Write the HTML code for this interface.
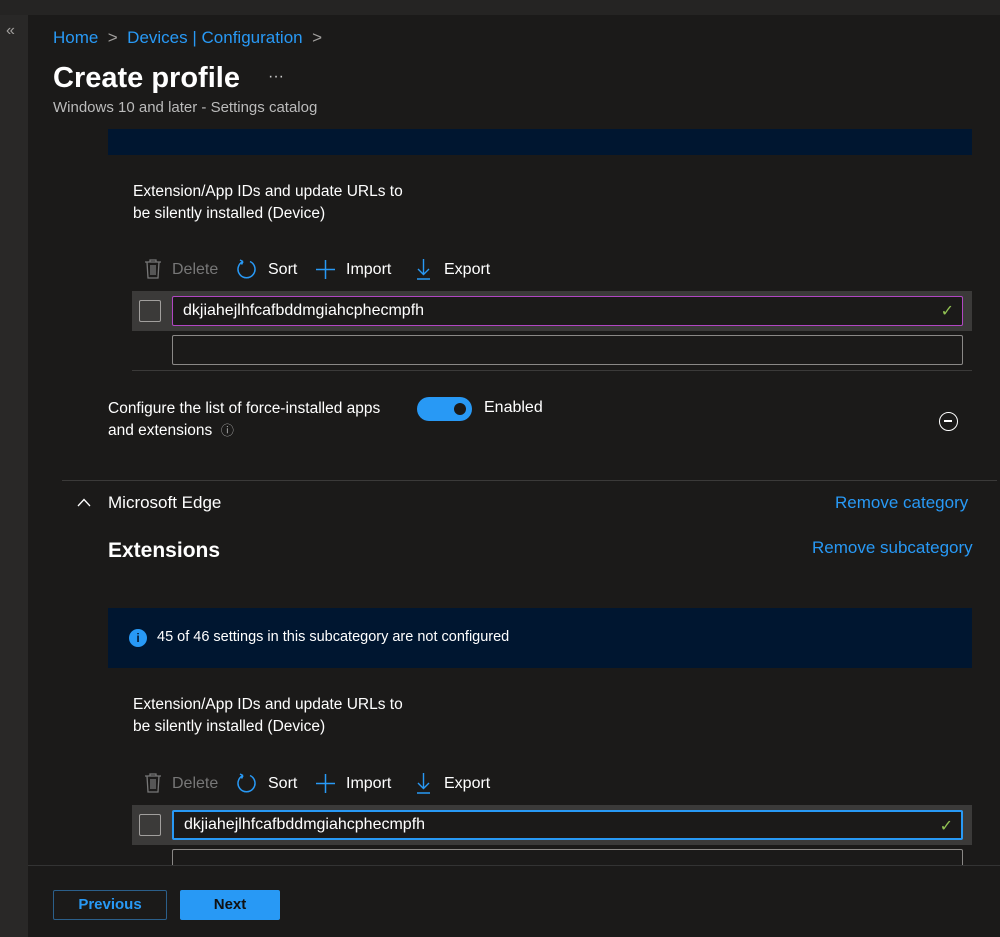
<!DOCTYPE html>
<html><head><style>
*{box-sizing:border-box;margin:0;padding:0}
body{width:1000px;height:937px;background:#1b1a19;font-family:"Liberation Sans",sans-serif;color:#fff;position:relative;overflow:hidden}
.a{position:absolute}
.blue{color:#2899f5}
.t{font-size:15.5px}
.info{background:#001630}
.inp{border:1px solid #8a8886;border-radius:2px;background:#1b1a19}
.cb{width:22px;height:22px;border:1px solid #a19f9d;border-radius:2px}
.tl{font-size:16px;line-height:20px}
</style></head><body>
<div class="a" style="left:0;top:0;width:1000px;height:15px;background:#252423"></div>
<div class="a" style="left:0;top:15px;width:28px;height:922px;background:#292827"></div>
<div class="a" style="left:6px;top:22px;color:#a19f9d;font-size:16px">«</div>
<div class="a blue" style="left:53px;top:28px;font-size:17px">Home <span style="color:#a19f9d">&nbsp;&gt;&nbsp;</span> Devices | Configuration <span style="color:#a19f9d">&nbsp;&gt;</span></div>
<div class="a" style="left:53px;top:62px;font-size:29px;font-weight:bold">Create profile</div>
<div class="a" style="left:268px;top:68px;font-size:16px;color:#ccc">···</div>
<div class="a" style="left:53px;top:99px;font-size:15px;color:#bbb">Windows 10 and later - Settings catalog</div>

<div class="a" style="left:28px;top:129px;width:972px;height:736px;overflow:hidden">
 <div class="a info" style="left:80px;top:-10px;width:864px;height:36px"></div>
 <div class="a t" style="left:105px;top:52px;line-height:22px">Extension/App IDs and update URLs to<br>be silently installed (Device)</div>
 <!-- toolbar 1 -->
 <svg class="a" style="left:116px;top:130px" width="18" height="20" viewBox="0 0 18 20" fill="none" stroke="#777" stroke-width="1.3"><path d="M1 3h16M6 3V1h6v2M3 3l1 16h10l1-16M7 6v10M9 6v10M11 6v10"/></svg>
 <div class="a tl" style="left:144px;top:131px;color:#777">Delete</div>
 <svg class="a" style="left:208px;top:130px" width="21" height="21" viewBox="0 0 21 21" fill="none" stroke="#2899f5" stroke-width="1.5"><path d="M7 2.5A8.5 8.5 0 1 0 14 2.5M7 2.5L4 1M7 2.5L5.5 5.5"/></svg>
 <div class="a tl" style="left:240px;top:131px">Sort</div>
 <svg class="a" style="left:288px;top:131px" width="19" height="19" viewBox="0 0 19 19" stroke="#2899f5" stroke-width="1.5"><path d="M9.5 0v19M0 9.5h19"/></svg>
 <div class="a tl" style="left:318px;top:131px">Import</div>
 <svg class="a" style="left:388px;top:130px" width="15" height="21" viewBox="0 0 15 21" fill="none" stroke="#2899f5" stroke-width="1.4"><path d="M7.5 0v15M2 10l5.5 5.5L13 10M1 20h13"/></svg>
 <div class="a tl" style="left:416px;top:131px">Export</div>
 <div class="a" style="left:104px;top:162px;width:840px;height:40px;background:#3b3a39"></div>
 <div class="a cb" style="left:111px;top:171px"></div>
 <div class="a inp" style="left:144px;top:167px;width:791px;height:30px;border-color:#b146c2;padding:5px 10px;font-size:16px">dkjiahejlhfcafbddmgiahcphecmpfh<span class="a" style="right:8px;top:4px;color:#92c353">✓</span></div>
 <div class="a inp" style="left:144px;top:206px;width:791px;height:30px"></div>
 <div class="a" style="left:104px;top:241px;width:840px;height:1px;background:#3b3a39"></div>
 <div class="a t" style="left:80px;top:269px;line-height:22px">Configure the list of force-installed apps<br>and extensions &nbsp;<span style="color:#aaa;font-size:13px">ⓘ</span></div>
 <div class="a" style="left:389px;top:268px;width:55px;height:24px;border-radius:12px;background:#2899f5"><div class="a" style="right:6px;top:6px;width:12px;height:12px;border-radius:6px;background:#1b1a19"></div></div>
 <div class="a" style="left:456px;top:270px;font-size:16px">Enabled</div>
 <div class="a" style="left:911px;top:283px;width:19px;height:19px;border:1.5px solid #fff;border-radius:50%"><div class="a" style="left:4px;top:7px;width:8px;height:1.5px;background:#fff"></div></div>
 <div class="a" style="left:34px;top:351px;width:935px;height:1px;background:#3b3a39"></div>
 <svg class="a" style="left:49px;top:369px" width="14" height="9" viewBox="0 0 14 9" fill="none" stroke="#fff" stroke-width="1.3"><path d="M1 8L7 1.5 13 8"/></svg>
 <div class="a" style="left:80px;top:364px;font-size:17px">Microsoft Edge</div>
 <div class="a blue" style="left:807px;top:364px;font-size:17px">Remove category</div>
 <div class="a" style="left:80px;top:410px;font-size:21px;font-weight:bold">Extensions</div>
 <div class="a blue" style="left:784px;top:409px;font-size:17px">Remove subcategory</div>
 <div class="a info" style="left:80px;top:479px;width:864px;height:60px"></div>
 <div class="a" style="left:101px;top:500px;width:18px;height:18px;border-radius:9px;background:#2899f5;color:#001630;font-size:12px;font-weight:bold;text-align:center;line-height:18px">i</div>
 <div class="a" style="left:129px;top:500px;font-size:14.5px">45 of 46 settings in this subcategory are not configured</div>
 <div class="a t" style="left:105px;top:565px;line-height:22px">Extension/App IDs and update URLs to<br>be silently installed (Device)</div>
 <!-- toolbar 2 -->
 <svg class="a" style="left:116px;top:644px" width="18" height="20" viewBox="0 0 18 20" fill="none" stroke="#777" stroke-width="1.3"><path d="M1 3h16M6 3V1h6v2M3 3l1 16h10l1-16M7 6v10M9 6v10M11 6v10"/></svg>
 <div class="a tl" style="left:144px;top:645px;color:#777">Delete</div>
 <svg class="a" style="left:208px;top:644px" width="21" height="21" viewBox="0 0 21 21" fill="none" stroke="#2899f5" stroke-width="1.5"><path d="M7 2.5A8.5 8.5 0 1 0 14 2.5M7 2.5L4 1M7 2.5L5.5 5.5"/></svg>
 <div class="a tl" style="left:240px;top:645px">Sort</div>
 <svg class="a" style="left:288px;top:645px" width="19" height="19" viewBox="0 0 19 19" stroke="#2899f5" stroke-width="1.5"><path d="M9.5 0v19M0 9.5h19"/></svg>
 <div class="a tl" style="left:318px;top:645px">Import</div>
 <svg class="a" style="left:388px;top:644px" width="15" height="21" viewBox="0 0 15 21" fill="none" stroke="#2899f5" stroke-width="1.4"><path d="M7.5 0v15M2 10l5.5 5.5L13 10M1 20h13"/></svg>
 <div class="a tl" style="left:416px;top:645px">Export</div>
 <div class="a" style="left:104px;top:676px;width:840px;height:40px;background:#3b3a39"></div>
 <div class="a cb" style="left:111px;top:685px"></div>
 <div class="a inp" style="left:144px;top:681px;width:791px;height:30px;border:2px solid #2899f5;padding:4px 10px;font-size:16px">dkjiahejlhfcafbddmgiahcphecmpfh<span class="a" style="right:8px;top:4px;color:#92c353">✓</span></div>
 <div class="a inp" style="left:144px;top:720px;width:791px;height:30px"></div>
</div>
<div class="a" style="left:28px;top:865px;width:972px;height:1px;background:#333"></div>
<div class="a blue" style="left:53px;top:890px;width:114px;height:30px;border:1px solid #2b5f8a;border-radius:2px;text-align:center;line-height:28px;font-size:15px;font-weight:bold">Previous</div>
<div class="a" style="left:180px;top:890px;width:100px;height:30px;background:#2899f5;border-radius:2px;text-align:center;line-height:30px;font-size:15px;font-weight:bold;color:#111">Next</div>
</body></html>
